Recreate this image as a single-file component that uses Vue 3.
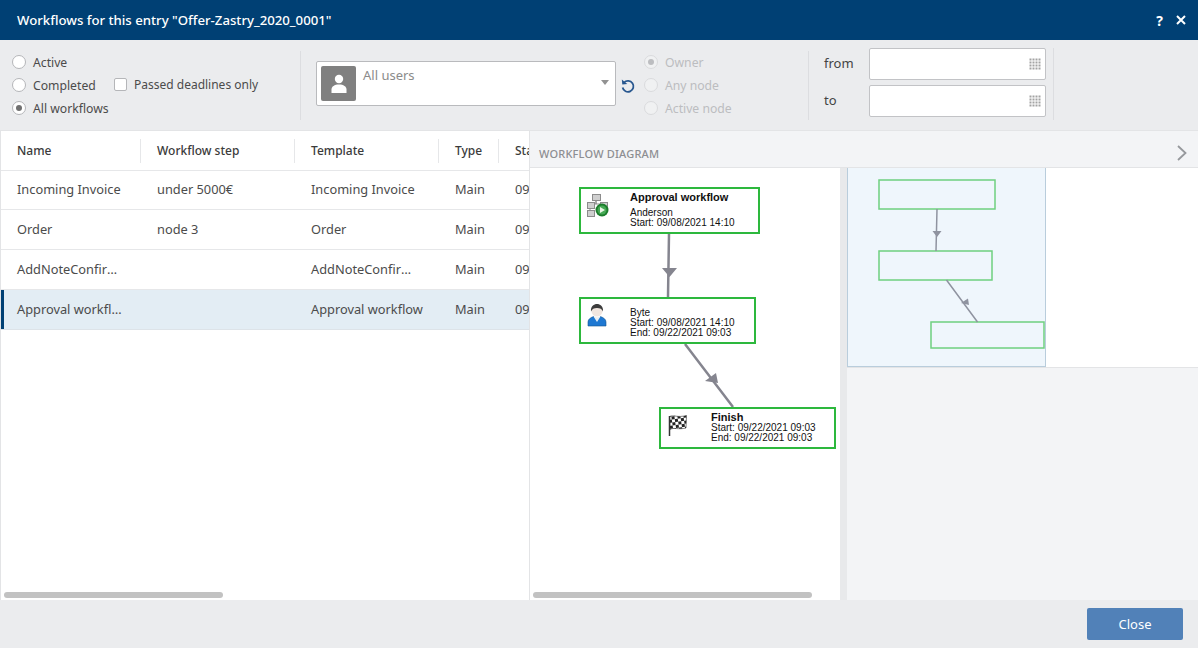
<script setup>
const statusOptions = [
  { label: 'Active', checked: false },
  { label: 'Completed', checked: false },
  { label: 'All workflows', checked: true },
];

const scopeOptions = [
  { label: 'Owner', checked: true },
  { label: 'Any node', checked: false },
  { label: 'Active node', checked: false },
];

const columns = ['Name', 'Workflow step', 'Template', 'Type', 'Start'];

const rows = [
  { name: 'Incoming Invoice', step: 'under 5000€', template: 'Incoming Invoice', type: 'Main', start: '09/08/2021 14:10' },
  { name: 'Order', step: 'node 3', template: 'Order', type: 'Main', start: '09/08/2021 14:10' },
  { name: 'AddNoteConfirmation', step: '', template: 'AddNoteConfirmation', type: 'Main', start: '09/08/2021 14:10' },
  { name: 'Approval workflow', step: '', template: 'Approval workflow', type: 'Main', start: '09/08/2021 14:10', selected: true },
];

// positions relative to the diagram canvas
const nodes = [
  { id: 'start', icon: 'flow', x: 49, y: 19, w: 181, h: 47, title: 'Approval workflow', lines: ['Anderson', 'Start: 09/08/2021 14:10'] },
  { id: 'byte', icon: 'user', x: 49, y: 129, w: 177, h: 47, lines: ['Byte', 'Start: 09/08/2021 14:10', 'End: 09/22/2021 09:03'] },
  { id: 'finish', icon: 'flag', x: 129, y: 239, w: 177, h: 42, title: 'Finish', lines: ['Start: 09/22/2021 09:03', 'End: 09/22/2021 09:03'] },
];

const miniNodes = [
  { x: 32, y: 12, w: 116, h: 29 },
  { x: 32, y: 83, w: 113, h: 29 },
  { x: 84, y: 154, w: 113, h: 26 },
];
</script>

<template>
  <div class="dialog">
    <header class="title-bar">
      <span class="title">Workflows for this entry "Offer-Zastry_2020_0001"</span>
      <span class="title-actions">
        <span class="help">?</span>
        <svg width="10" height="10" viewBox="0 0 10 10"><path d="M1 1l8 8M9 1l-8 8" stroke="#fff" stroke-width="2" /></svg>
      </span>
    </header>

    <section class="filters">
      <div class="filter-group status-group">
        <div class="radio-list">
          <label v-for="opt in statusOptions" :key="opt.label" class="radio-row">
            <span class="radio" :class="{ checked: opt.checked }"></span>{{ opt.label }}
          </label>
        </div>
        <label class="check-row"><span class="checkbox"></span>Passed deadlines only</label>
      </div>

      <div class="filter-group user-group">
        <div class="user-box">
          <span class="avatar">
            <svg width="18" height="20" viewBox="0 0 18 20">
              <circle cx="9" cy="5" r="4.2" fill="#fff" />
              <path d="M1.500 19v-3.500c0-3 3-5 7.500-5s7.500 2 7.500 5V19z" fill="#fff" />
            </svg>
          </span>
          <span class="user-text">All users</span>
          <span class="caret"></span>
        </div>
        <svg class="reset" width="16" height="16" viewBox="0 0 16 16">
          <path d="M4 4.500A5.500 5.500 0 1 1 2.600 9.500" fill="none" stroke="#28578f" stroke-width="1.800" />
          <path d="M1.800 1.500l.5 5 5-.6z" fill="#28578f" />
        </svg>
        <div class="radio-list disabled">
          <label v-for="opt in scopeOptions" :key="opt.label" class="radio-row">
            <span class="radio" :class="{ checked: opt.checked }"></span>{{ opt.label }}
          </label>
        </div>
      </div>

      <div class="filter-group date-group">
        <div v-for="lbl in ['from', 'to']" :key="lbl" class="date-row">
          <span class="date-label">{{ lbl }}</span>
          <span class="date-input">
            <svg width="13" height="13" viewBox="0 0 13 13" fill="#a3a3a3">
              <template v-for="c in 4" :key="c">
                <rect v-for="r in 4" :key="r" :x="(c - 1) * 3 + 0.500" :y="(r - 1) * 3 + 0.500" width="2" height="2" />
              </template>
            </svg>
          </span>
        </div>
      </div>
    </section>

    <main class="body">
      <div class="list-pane">
        <div class="table">
          <div class="table-row head">
            <div v-for="col in columns" :key="col" class="cell"><span class="head-text">{{ col }}</span></div>
          </div>
          <div v-for="row in rows" :key="row.name" class="table-row" :class="{ selected: row.selected }">
            <div class="cell name-cell">{{ row.name }}</div>
            <div class="cell">{{ row.step }}</div>
            <div class="cell template-cell">{{ row.template }}</div>
            <div class="cell">{{ row.type }}</div>
            <div class="cell">{{ row.start }}</div>
          </div>
        </div>
        <div class="scroll-track"><span class="scroll-thumb list-thumb"></span></div>
      </div>

      <div class="diagram-pane">
        <div class="diagram-head">
          <span class="diagram-title">WORKFLOW DIAGRAM</span>
          <svg width="12" height="16" viewBox="0 0 12 16"><path d="M2 1l7.500 7L2 15" fill="none" stroke="#96989c" stroke-width="1.800" /></svg>
        </div>
        <div class="diagram-body">
          <div class="canvas-wrap">
            <div class="canvas">
              <svg class="links" width="310" height="400" viewBox="0 0 310 400">
                <path d="M139 66L138 129M155 176L203 239" stroke="#85858f" stroke-width="2.500" fill="none" />
                <path d="M132 100h15l-7.500 9zM175 213l11-8 2 10z" fill="#85858f" />
              </svg>
              <div
                v-for="n in nodes"
                :key="n.id"
                class="node"
                :class="'node-' + n.id"
                :style="{ left: n.x + 'px', top: n.y + 'px', width: n.w + 'px', height: n.h + 'px' }"
              >
                <span class="node-icon">
                  <svg v-if="n.icon === 'flow'" width="26" height="26" viewBox="0 0 26 26">
                    <path d="M10 6v5H4M10 6v5h9" fill="none" stroke="#8c8c8c" />
                    <path d="M4 11v8" stroke="#8c8c8c" />
                    <g fill="#cfcfcf" stroke="#8c8c8c">
                      <rect x="6.500" y="1.500" width="8" height="6" />
                      <rect x="1.500" y="9.500" width="7" height="6" />
                      <rect x="1.500" y="17.500" width="7" height="6" />
                      <rect x="14.500" y="9.500" width="7" height="6" />
                    </g>
                    <circle cx="16" cy="17" r="6.500" fill="#1b7d2b" />
                    <circle cx="16" cy="17" r="4.500" fill="#46a955" />
                    <path d="M14 14l5 3-5 3z" fill="#eaf6e6" />
                  </svg>
                  <svg v-else-if="n.icon === 'user'" width="20" height="24" viewBox="0 0 20 24">
                    <path d="M1 23v-4c0-3 3-4.500 5.500-5.500L10 17l3.500-3.500C16 14.500 19 16 19 19v4z" fill="#1e78d2" stroke="#14558f" stroke-width=".6" />
                    <path d="M6.500 13.500L10 19l3.500-5.500-3.500 1z" fill="#e8eef2" />
                    <circle cx="10" cy="8" r="5.500" fill="#f1e6df" />
                    <path d="M4 8.500C3.500 3 7 1 10 1s6.500 2 6 7.500C15 6 13 5 10 5S5 6 4 8.500z" fill="#3c3c3c" />
                  </svg>
                  <svg v-else width="20" height="23" viewBox="0 0 20 23">
                    <defs>
                      <pattern id="checker" width="6" height="6" patternUnits="userSpaceOnUse" patternTransform="rotate(-8)">
                        <rect width="6" height="6" fill="#fff" />
                        <rect width="3" height="3" fill="#222" />
                        <rect x="3" y="3" width="3" height="3" fill="#222" />
                      </pattern>
                    </defs>
                    <path d="M1.500 2.500C6 .5 9 4 18.500 1.500L18 14C10 16 6 13 2 15.500z" fill="url(#checker)" stroke="#333" stroke-width=".6" />
                    <path d="M1.500 2v20" stroke="#333" stroke-width="1.500" />
                  </svg>
                </span>
                <div class="node-text">
                  <div v-if="n.title" class="node-title">{{ n.title }}</div>
                  <div v-for="line in n.lines" :key="line" class="node-line">{{ line }}</div>
                </div>
              </div>
            </div>
            <div class="scroll-track"><span class="scroll-thumb canvas-thumb"></span></div>
          </div>
          <div class="splitter"></div>
          <div class="overview">
            <div class="overview-top">
              <svg class="minimap" width="199" height="199" viewBox="0 0 199 199">
                <rect x=".5" y="-1" width="198" height="199.500" fill="#eff6fc" stroke="#b9cddc" />
                <g fill="none" stroke="#6fd07f" stroke-width="1.500">
                  <rect v-for="(m, i) in miniNodes" :key="i" :x="m.x" :y="m.y" :width="m.w" :height="m.h" />
                </g>
                <path d="M90 41L89 83M99.500 112L130.500 154" stroke="#8f93a0" stroke-width="1.500" fill="none" />
                <path d="M85.500 63h9l-4.500 6zM114 135l7-4.500 1 6.500z" fill="#8f93a0" />
              </svg>
            </div>
            <div class="overview-rest"></div>
          </div>
        </div>
      </div>
    </main>

    <footer class="footer">
      <button class="close-btn" type="button">Close</button>
    </footer>
  </div>
</template>

<style>
html,
body {
  margin: 0;
  background: #fff;
}
</style>

<style scoped>
.dialog {
  width: 1198px;
  height: 648px;
  display: flex;
  flex-direction: column;
  overflow: hidden;
  font-family: "Noto Sans", "Open Sans", sans-serif;
  font-size: 12.800px;
  color: #4b4b4b;
  background: #ebecee;
}

/* title */
.title-bar {
  flex: 0 0 40px;
  display: flex;
  align-items: center;
  justify-content: space-between;
  padding: 0 12px 0 17px;
  background: #004074;
  color: #fff;
}

.title {
  font-size: 13.200px;
  font-weight: 500;
}

.title-actions {
  display: flex;
  align-items: center;
  gap: 13px;
}

.help {
  font-size: 14px;
  font-weight: 700;
}

/* filter bar */
.filters {
  flex: 0 0 91px;
  display: flex;
  box-sizing: border-box;
  padding-top: 8px;
  border-bottom: 1px solid #e3e4e6;
}

.filter-group {
  box-sizing: border-box;
  height: 69px;
  margin-top: 3px;
  display: flex;
  border-right: 1px solid #dcdde0;
  font-size: 12.200px;
}

.status-group {
  width: 301px;
  padding-left: 12px;
}

.radio-list {
  display: flex;
  flex-direction: column;
  gap: 3px;
  margin-top: 1px;
}

.status-group .radio-list {
  flex: 0 0 102px;
}

.radio-row {
  height: 20px;
  display: flex;
  align-items: center;
  gap: 7px;
}

.radio {
  box-sizing: border-box;
  width: 14px;
  height: 14px;
  border-radius: 50%;
  border: 1px solid #b5b6b9;
  background: #fff;
  display: flex;
  align-items: center;
  justify-content: center;
}

.radio.checked::after {
  content: "";
  width: 6px;
  height: 6px;
  border-radius: 50%;
  background: #707070;
}

.check-row {
  display: flex;
  align-items: center;
  gap: 7px;
  height: 20px;
  margin-top: 23px;
  font-size: 12px;
}

.checkbox {
  box-sizing: border-box;
  width: 13px;
  height: 13px;
  border: 1px solid #b5b6b9;
  border-radius: 2px;
  background: #fff;
}

.user-group {
  width: 508px;
  padding-left: 15px;
}

.user-box {
  box-sizing: border-box;
  width: 300px;
  height: 45px;
  margin-top: 10px;
  padding: 4px;
  display: flex;
  border: 1px solid #b9babd;
  border-radius: 2px;
  background: #fff;
  font-size: 13px;
}

.avatar {
  width: 35px;
  height: 35px;
  border-radius: 2px;
  background: #808080;
  display: flex;
  align-items: center;
  justify-content: center;
}

.user-text {
  flex: 1;
  margin-left: 7px;
  line-height: 18px;
  color: #8b8b8b;
}

.caret {
  align-self: center;
  margin: 0 2px 0 0;
  border-left: 4px solid transparent;
  border-right: 4px solid transparent;
  border-top: 5px solid #929292;
  transform: translateY(-1px);
}

.reset {
  margin: 27px 0 0 4px;
}

.disabled {
  margin-left: 8px;
  color: #bcbdc0;
}

.disabled .radio {
  border-color: #dadbdd;
  background: #f0f1f2;
}

.disabled .radio.checked::after {
  background: #bcbdc0;
}

.date-group {
  width: 245px;
  height: 72px;
  margin-top: 0;
  padding-left: 15px;
  flex-direction: column;
  gap: 5px;
  font-size: 13px;
}

.date-row {
  display: flex;
  align-items: center;
  height: 32px;
}

.date-label {
  width: 45px;
  padding-bottom: 2px;
  color: #444;
}

.date-input {
  box-sizing: border-box;
  width: 177px;
  height: 32px;
  padding-right: 3px;
  display: flex;
  align-items: center;
  justify-content: flex-end;
  border: 1px solid #c2c3c6;
  border-radius: 2px;
  background: #fff;
}

/* main split */
.body {
  flex: 1;
  display: flex;
  min-height: 0;
}

.list-pane {
  box-sizing: border-box;
  width: 530px;
  display: flex;
  flex-direction: column;
  justify-content: space-between;
  overflow: hidden;
  background: #fff;
  border-left: 1px solid #e3e4e6;
  border-right: 1px solid #e3e4e6;
}

.table {
  width: 700px;
}

.table-row {
  box-sizing: border-box;
  display: grid;
  grid-template-columns: 140px 154px 144px 60px 200px;
  height: 39px;
  padding-bottom: 2px;
  margin-bottom: 1px;
  box-shadow: 0 1px 0 #e6e7e9;
  align-items: center;
}

.table-row.head {
  padding-bottom: 0;
  margin-bottom: 0;
  color: #3b3b3b;
  font-weight: 500;
  font-size: 12px;
}

.table-row.selected {
  background: #e3edf4;
  box-shadow: 0 1px 0 #dde3e8, inset 3px 0 0 #004074;
}

.cell {
  box-sizing: border-box;
  padding: 0 12px 0 16px;
  overflow: hidden;
  white-space: nowrap;
  text-overflow: ellipsis;
}

.name-cell {
  padding-right: 14px;
}

.template-cell {
  padding-right: 16px;
}

.head .cell {
  height: 24px;
  line-height: 24px;
  border-right: 1px solid #e6e7e9;
}

.scroll-track {
  flex: 0 0 12px;
  height: 12px;
  padding: 4px 3px 0;
  box-sizing: border-box;
}

.scroll-thumb {
  display: block;
  height: 6px;
  border-radius: 3px;
  background: #c2c2c2;
}

.list-thumb {
  width: 219px;
}

.canvas-thumb {
  width: 279px;
}

/* diagram */
.diagram-pane {
  flex: 1;
  min-width: 0;
  display: flex;
  flex-direction: column;
  background: #f3f4f6;
}

.diagram-head {
  box-sizing: border-box;
  flex: 0 0 37px;
  padding: 8px 10px 0 9px;
  display: flex;
  align-items: center;
  justify-content: space-between;
  border-bottom: 1px solid #e3e4e6;
}

.diagram-title {
  font-size: 11px;
  font-weight: 500;
  letter-spacing: 0.2px;
  color: #8d8e92;
}

.diagram-body {
  flex: 1;
  min-height: 0;
  display: flex;
}

.canvas-wrap {
  width: 310px;
  display: flex;
  flex-direction: column;
  background: #fff;
}

.canvas {
  position: relative;
  flex: 1;
  overflow: hidden;
}

.links {
  position: absolute;
  left: 0;
  top: 0;
}

.node {
  position: absolute;
  box-sizing: border-box;
  display: flex;
  border: 2px solid #2db83d;
  background: #fff;
  font-family: "Liberation Sans", Arial, sans-serif;
  font-size: 10px;
  line-height: 10px;
  color: #111;
}

.node-icon {
  flex: 0 0 49px;
  padding: 4px 0 0 5px;
  box-sizing: border-box;
}

.node-byte .node-icon {
  padding-left: 6px;
}

.node-finish .node-icon {
  padding: 5px 0 0 7px;
}

.node-text {
  white-space: nowrap;
}

.node-start .node-text {
  padding-top: 3px;
}

.node-start .node-title {
  margin-bottom: 5px;
}

.node-byte .node-text {
  padding-top: 9px;
}

.node-finish .node-text {
  padding: 3px 0 0 1px;
}

.node-title {
  font-size: 11px;
  font-weight: 700;
  line-height: 11px;
}

.node-line {
  line-height: 10px;
}

.splitter {
  flex: 0 0 7px;
  background: #e8e9eb;
}

.overview {
  flex: 1;
  display: flex;
  flex-direction: column;
}

.overview-top {
  flex: 0 0 199px;
  background: #fff;
  border-bottom: 1px solid #e3e4e6;
}

.minimap {
  display: block;
}

/* footer */
.footer {
  flex: 0 0 48px;
  box-sizing: border-box;
  display: flex;
  justify-content: flex-end;
  padding: 8px 15px 0 0;
}

.close-btn {
  width: 96px;
  height: 32px;
  border: none;
  border-radius: 2px;
  background: #5181b8;
  color: #fff;
  font: inherit;
  font-size: 13px;
}
</style>
